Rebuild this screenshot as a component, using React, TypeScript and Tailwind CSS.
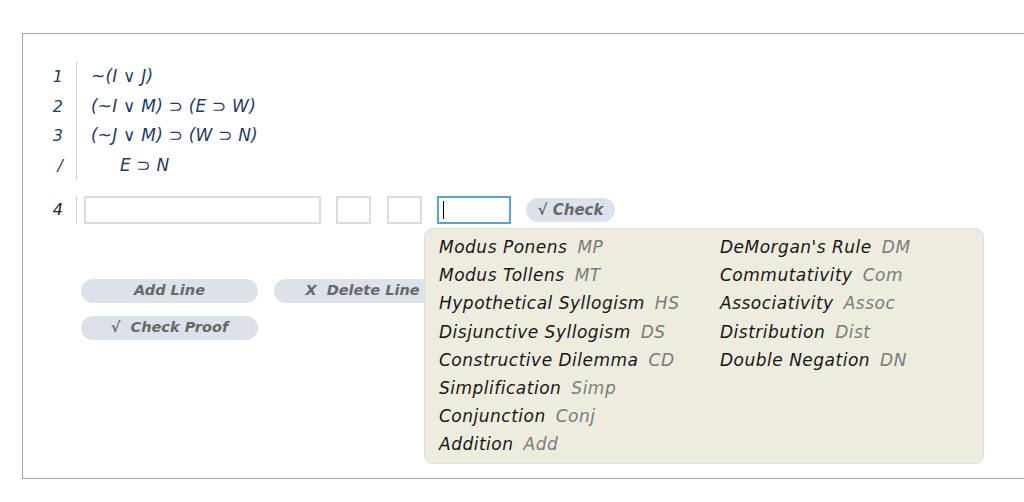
const font = { fontFamily: '"DejaVu Sans", Verdana, sans-serif' };

const premises = [
  { n: '1', f: '~(I ∨ J)' },
  { n: '2', f: '(~I ∨ M) ⊃ (E ⊃ W)' },
  { n: '3', f: '(~J ∨ M) ⊃ (W ⊃ N)' },
];

const rulesLeft = [
  ['Modus Ponens', 'MP'],
  ['Modus Tollens', 'MT'],
  ['Hypothetical Syllogism', 'HS'],
  ['Disjunctive Syllogism', 'DS'],
  ['Constructive Dilemma', 'CD'],
  ['Simplification', 'Simp'],
  ['Conjunction', 'Conj'],
  ['Addition', 'Add'],
];

const rulesRight = [
  ['DeMorgan\'s Rule', 'DM'],
  ['Commutativity', 'Com'],
  ['Associativity', 'Assoc'],
  ['Distribution', 'Dist'],
  ['Double Negation', 'DN'],
];

function RuleList({ rules }: { rules: string[][] }) {
  return (
    <div className="flex flex-col">
      {rules.map(([name, abbr]) => (
        <div key={abbr} className="h-[28.2px] leading-[28.2px] whitespace-nowrap">
          <span className="text-[#161616]">{name}</span>
          <span className="ml-[10px] text-[#7b7b7b]">{abbr}</span>
        </div>
      ))}
    </div>
  );
}

export default function App() {
  return (
    <div className="min-h-screen bg-white pl-[22px] pt-[33px] overflow-hidden italic" style={font}>
      <div className="w-[1040px] h-[446px] border border-[#a9a9a9] border-r-0 pt-[28px]">
        {/* premises */}
        <div className="flex">
          <div className="w-[40px] flex flex-col text-right text-[16px] text-[#1d3b6b]">
            {premises.map((p) => (
              <div key={p.n} className="h-[29.5px] leading-[29.5px]">{p.n}</div>
            ))}
            <div className="h-[29.5px] leading-[29.5px]">/</div>
          </div>
          <div className="ml-[13px] w-px bg-[#d0d0d0]"></div>
          <div className="pl-[14px] flex flex-col text-[17px] tracking-[0.2px] text-[#1d3b6b]">
            {premises.map((p) => (
              <div key={p.n} className="h-[29.5px] leading-[29.5px] whitespace-nowrap">{p.f}</div>
            ))}
            <div className="h-[29.5px] leading-[29.5px] pl-[29px]">E ⊃ N</div>
          </div>
        </div>

        {/* new line */}
        <div className="flex items-center mt-[16px] h-[28px]">
          <div className="w-[40px] text-right text-[16px] text-[#222]">4</div>
          <div className="ml-[13px] w-px h-[28px] bg-[#d0d0d0]"></div>
          <div className="ml-[7px] w-[237px] h-[28px] border-2 border-[#dcdcdc] bg-white"></div>
          <div className="ml-[15px] w-[35px] h-[28px] border-2 border-[#dcdcdc] bg-white"></div>
          <div className="ml-[16px] w-[35px] h-[28px] border-2 border-[#dcdcdc] bg-white"></div>
          <div className="relative ml-[15px] w-[74px] h-[28px] border-2 border-[#52a6d6] bg-white flex items-center">
            <div className="ml-[4px] w-px h-[18px] bg-black"></div>
            <div className="absolute left-[-15px] top-[30px] w-[560px] h-[236px] bg-[#eeecdf] border border-[#dadfe3] rounded-[9px] pl-[14px] pt-[4px] flex text-[17px] tracking-[0.5px]">
              <div className="w-[281px]">
                <RuleList rules={rulesLeft} />
              </div>
              <div>
                <RuleList rules={rulesRight} />
              </div>
            </div>
          </div>
          <button className="ml-[15px] w-[89px] h-[24px] rounded-full bg-[#dde2ea] text-[#686868] font-bold italic text-[15px]">
            √ Check
          </button>
        </div>

        {/* actions */}
        <div className="ml-[58px] mt-[55px] flex flex-col gap-[13px]">
          <div className="flex gap-[16px]">
            <button className="w-[177px] h-[24px] rounded-full bg-[#dde2ea] text-[#686868] font-bold italic text-[14.5px]">
              Add Line
            </button>
            <button className="w-[177px] h-[24px] rounded-full bg-[#dde2ea] text-[#686868] font-bold italic text-[14.5px]">
              X&nbsp;&nbsp;Delete Line
            </button>
          </div>
          <button className="w-[177px] h-[24px] rounded-full bg-[#dde2ea] text-[#686868] font-bold italic text-[14.5px]">
            √&nbsp;&nbsp;Check Proof
          </button>
        </div>
      </div>
    </div>
  );
}
